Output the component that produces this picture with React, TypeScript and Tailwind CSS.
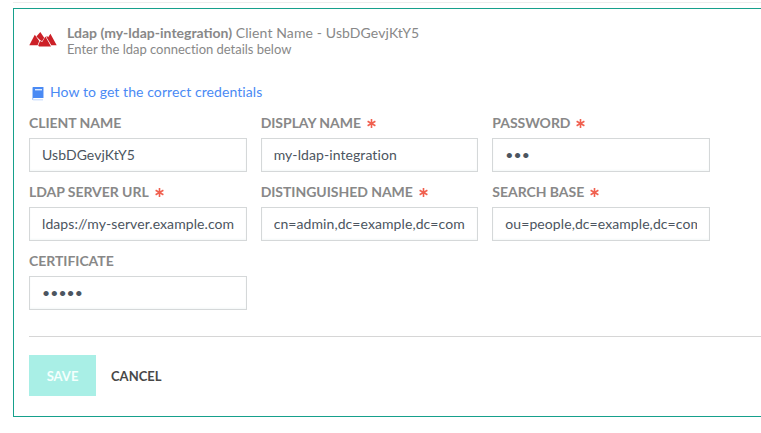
import React from "react";

type Field = { label: string; value: string; required?: boolean; type?: string };

const fields: Field[] = [
  { label: "CLIENT NAME", value: "UsbDGevjKtY5" },
  { label: "DISPLAY NAME", value: "my-ldap-integration", required: true },
  { label: "PASSWORD", value: "abc", required: true, type: "password" },
  { label: "LDAP SERVER URL", value: "ldaps://my-server.example.com", required: true },
  { label: "DISTINGUISHED NAME", value: "cn=admin,dc=example,dc=com", required: true },
  { label: "SEARCH BASE", value: "ou=people,dc=example,dc=com", required: true },
  { label: "CERTIFICATE", value: "abcde", type: "password" },
];

function Asterisk() {
  return (
    <svg className="ml-[6px] mt-px h-[9px] w-[9px]" viewBox="0 0 9 9" stroke="#f0604f" strokeWidth="1.6">
      <path d="M4.5 0v9M0.6 2.3l7.8 4.4M8.4 2.3L0.6 6.7" />
    </svg>
  );
}

function Logo() {
  return (
    <svg className="mt-[8px] h-[15px] w-[28px] shrink-0" viewBox="0 0 28 15" fill="#cc2027">
      <path d="M0.3 13.2 5.8 2.8 10.2 9 8.6 13.2z" />
      <path d="M7.4 4.4 11.3 0 15.2 5.8 13 9.2 11 8z" />
      <path d="M9.2 13.4 11 9 13.2 10 16.4 4.6 22 14.4H10z" />
      <path d="M17.2 4.8 18.2 4 19 5.4 21.4 1.8 27.7 13.2H22.3z" />
    </svg>
  );
}

function Book() {
  return (
    <svg className="mt-[4px] h-[14px] w-[12px] shrink-0" viewBox="0 0 12 14">
      <path d="M1 0H12V11H1.5L1 12.5H11V13.3H1.5Q0 13.3 0 12V1.3Q0 0 1 0z" fill="#a9c8fb" />
      <path d="M1 0H11V11H1z" fill="#4a8af4" />
      <path d="M3 2H10V3.4H3z" fill="#dce9fe" />
    </svg>
  );
}

export default function App() {
  return (
    <div className="h-[433px] w-[761px] overflow-hidden bg-white pl-[13px] pt-[2px] font-['Lato',sans-serif] text-[14px] text-[#888888]">
      <div className="h-px bg-[#ededed]" />
      <section className="mt-[5px] h-[409px] border border-r-0 border-[#16a08c] pl-[15px]">
        <header className="flex pt-[15px]">
          <Logo />
          <div className="ml-[10px]">
            <h1 className="h-[17px] whitespace-nowrap text-[14px] leading-[18px]">
              <b className="font-bold">Ldap (my-ldap-integration)</b>{" "}
              <span className="tracking-[0.12px]">Client Name - UsbDGevjKtY5</span>
            </h1>
            <p className="text-[13px] leading-[16px] tracking-[-0.02px]">Enter the ldap connection details below</p>
          </div>
        </header>
        <a className="ml-[3px] mt-[26px] flex h-[18px] text-[14px] leading-[18px] text-[#4a8af4]">
          <Book />
          <span className="ml-[6px] tracking-[0.08px]">How to get the correct credentials</span>
        </a>
        <div className="mt-[13px] grid w-[681px] grid-cols-3 gap-x-[14px]">
          {fields.map((f) => (
            <label key={f.label} className="block h-[69px]">
              <span className="flex h-[18px] items-center whitespace-nowrap text-[14px] font-bold leading-[18px] tracking-[-0.04px]">
                {f.label}
                {f.required && <Asterisk />}
              </span>
              <input
                type={f.type ?? "text"}
                defaultValue={f.value}
                className="mt-[6px] block h-[34px] w-full border border-[#d5d8d9] px-[12px] pb-[2px] text-[14px] tracking-[0.08px] text-[#4c5560] shadow-[inset_0_-1px_2px_#f4f8f8]"
              />
            </label>
          ))}
        </div>
        <hr className="mt-[15px] border-[#d6d6d6]" />
        <div className="mt-[18px] flex items-center">
          <button className="h-[41px] w-[67px] bg-[#a9efe6] pt-[2px] text-[13px] font-bold text-[#f4fffd]">SAVE</button>
          <button className="ml-[15px] pt-[2px] text-[13px] font-bold text-[#484848]">CANCEL</button>
        </div>
      </section>
    </div>
  );
}
